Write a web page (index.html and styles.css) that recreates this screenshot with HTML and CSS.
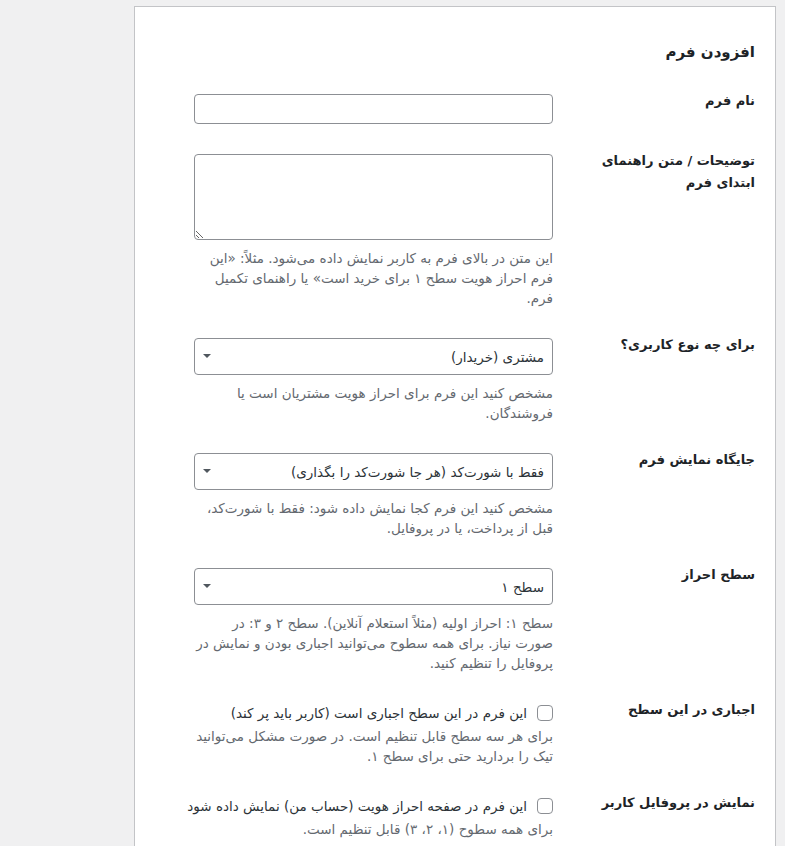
FILE: index.html
```html
<!DOCTYPE html>
<html lang="fa" dir="rtl">
<head>
    <meta charset="UTF-8">
    <meta name="viewport" content="width=device-width, initial-scale=1.0">
    <title>افزودن فرم</title>
    <link rel="stylesheet" href="styles.css">
</head>
<body>

<div class="wrap">
    <div class="card">
        <h2 class="card-title">افزودن فرم</h2>

        <div class="form-table">
            <!-- نام فرم -->
            <div class="form-row">
                <div class="row-label"><label for="formName">نام فرم</label></div>
                <div class="row-field">
                    <input type="text" id="formName" class="field-input">
                </div>
            </div>

            <!-- توضیحات -->
            <div class="form-row">
                <div class="row-label"><label for="formIntro">توضیحات / متن راهنمای ابتدای فرم</label></div>
                <div class="row-field">
                    <textarea id="formIntro" class="field-textarea"></textarea>
                    <p class="description">این متن در بالای فرم به کاربر نمایش داده می‌شود. مثلاً: «این فرم احراز هویت سطح ۱ برای خرید است» یا راهنمای تکمیل فرم.</p>
                </div>
            </div>

            <!-- نوع کاربر -->
            <div class="form-row">
                <div class="row-label"><label for="userType">برای چه نوع کاربری؟</label></div>
                <div class="row-field">
                    <div class="select-wrap">
                        <select id="userType" class="field-select">
                            <option>مشتری (خریدار)</option>
                            <option>فروشنده</option>
                        </select>
                    </div>
                    <p class="description">مشخص کنید این فرم برای احراز هویت مشتریان است یا فروشندگان.</p>
                </div>
            </div>

            <!-- جایگاه نمایش -->
            <div class="form-row">
                <div class="row-label"><label for="formPlace">جایگاه نمایش فرم</label></div>
                <div class="row-field">
                    <div class="select-wrap">
                        <select id="formPlace" class="field-select">
                            <option>فقط با شورت‌کد (هر جا شورت‌کد را بگذاری)</option>
                            <option>قبل از پرداخت</option>
                            <option>در پروفایل</option>
                        </select>
                    </div>
                    <p class="description">مشخص کنید این فرم کجا نمایش داده شود: فقط با شورت‌کد، قبل از پرداخت، یا در پروفایل.</p>
                </div>
            </div>

            <!-- سطح احراز -->
            <div class="form-row">
                <div class="row-label"><label for="authLevel">سطح احراز</label></div>
                <div class="row-field">
                    <div class="select-wrap">
                        <select id="authLevel" class="field-select">
                            <option>سطح ۱</option>
                            <option>سطح ۲</option>
                            <option>سطح ۳</option>
                        </select>
                    </div>
                    <p class="description">سطح ۱: احراز اولیه (مثلاً استعلام آنلاین). سطح ۲ و ۳: در صورت نیاز. برای همه سطوح می‌توانید اجباری بودن و نمایش در پروفایل را تنظیم کنید.</p>
                </div>
            </div>

            <!-- اجباری -->
            <div class="form-row">
                <div class="row-label"><span>اجباری در این سطح</span></div>
                <div class="row-field">
                    <label class="check-line">
                        <input type="checkbox" class="field-check">
                        این فرم در این سطح اجباری است (کاربر باید پر کند)
                    </label>
                    <p class="description desc-tight">برای هر سه سطح قابل تنظیم است. در صورت مشکل می‌توانید تیک را بردارید حتی برای سطح ۱.</p>
                </div>
            </div>

            <!-- پروفایل -->
            <div class="form-row">
                <div class="row-label"><span>نمایش در پروفایل کاربر</span></div>
                <div class="row-field">
                    <label class="check-line">
                        <input type="checkbox" class="field-check">
                        این فرم در صفحه احراز هویت (حساب من) نمایش داده شود
                    </label>
                    <p class="description desc-tight">برای همه سطوح (۱، ۲، ۳) قابل تنظیم است.</p>
                </div>
            </div>
        </div>
    </div>
</div>

</body>
</html>
```

FILE: styles.css
```css
/* پایه صفحه */
body {
    margin: 0;
    background-color: #f0f0f1;
    direction: rtl;
    font-family: "DejaVu Sans", sans-serif;
    color: #1d2327;
    overflow: hidden;
}

.wrap {
    padding: 6px 9px 0 0;
}

/* کارت اصلی */
.card {
    width: 642px;
    min-height: 860px;
    box-sizing: border-box;
    background-color: #fff;
    border: 1px solid #c3c4c7;
    border-bottom: none;
    padding: 33px 20px 0 0;
}

.card-title {
    margin: 0 0 15px;
    font-size: 15px;
    line-height: 24px;
    font-weight: bold;
    color: #1d2327;
}

/* ردیف‌های فرم */
.form-row {
    display: grid;
    grid-template-columns: 200px 361px;
    padding: 15px 0;
}

.row-label {
    padding: 0 0 0 25px;
    margin-top: -4px;
    font-size: 13px;
    line-height: 22px;
    font-weight: bold;
    color: #1d2327;
}

.row-field {
    padding-right: 2px;
}

.field-input {
    display: block;
    width: 100%;
    height: 30px;
    box-sizing: border-box;
    border: 1px solid #8c8f94;
    border-radius: 4px;
    background-color: #fff;
    margin: 0;
}

.field-textarea {
    display: block;
    width: 100%;
    height: 86px;
    box-sizing: border-box;
    border: 1px solid #8c8f94;
    border-radius: 4px;
    margin: 0;
    resize: vertical;
}

/* منوی کشویی */
.select-wrap {
    position: relative;
}

.select-wrap::after {
    content: "";
    position: absolute;
    left: 9px;
    top: 16px;
    border-left: 4px solid transparent;
    border-right: 4px solid transparent;
    border-top: 4px solid #50575e;
    pointer-events: none;
}

.field-select {
    display: block;
    width: 100%;
    height: 37px;
    box-sizing: border-box;
    border: 1px solid #8c8f94;
    border-radius: 4px;
    background-color: #fff;
    padding: 0 8px 0 24px;
    font-family: inherit;
    font-size: 13.5px;
    color: #2c3338;
    appearance: none;
    -webkit-appearance: none;
    margin: 0;
}

.description {
    margin: 8px 0 0 1px;
    font-size: 13.5px;
    line-height: 20px;
    color: #646970;
}

.desc-tight {
    margin-top: 3px;
}

/* چک‌باکس */
.check-line {
    display: flex;
    align-items: center;
    gap: 10px;
    font-size: 13.5px;
    line-height: 20px;
    color: #2c3338;
    white-space: nowrap;
}

.field-check {
    appearance: none;
    -webkit-appearance: none;
    width: 16px;
    height: 16px;
    margin: 0;
    border: 1px solid #8c8f94;
    border-radius: 4px;
    background-color: #fff;
    flex-shrink: 0;
}
```
